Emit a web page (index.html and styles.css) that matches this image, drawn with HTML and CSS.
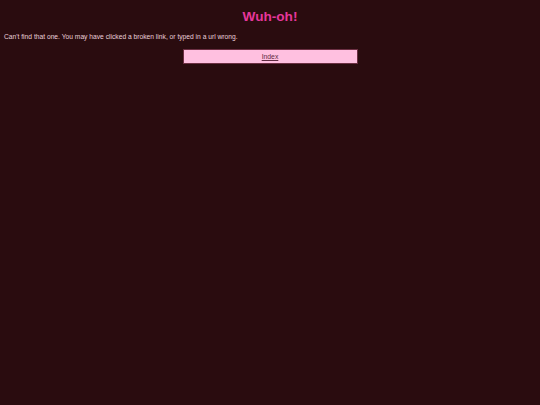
FILE: index.html
```html
<!DOCTYPE html>
<html lang="en">
<head>
    <meta charset="UTF-8">
    <meta name="viewport" content="width=device-width, initial-scale=1.0">
    <title>Wuh-oh!</title>
    <link rel="stylesheet" href="styles.css">
</head>
<body>
    <h1 class="title">Wuh-oh!</h1>
    <p class="message">Can't find that one. You may have clicked a broken link, or typed in a url wrong.</p>
    <div class="nav">
        <a class="nav-link" href="/">Index</a>
    </div>
</body>
</html>
```

FILE: styles.css
```css
*{
    margin: 0;
    padding: 0;
    box-sizing: border-box;
}
body{
    background-color: #2a0c0f;
    color: #ead0da;
    font-family: "Liberation Sans", Arial, sans-serif;
    padding: 0 4px;
    height: 100vh;
}
.title{
    color: #e6379b;
    font-size: 13.6px;
    text-align: center;
    padding-top: 8px;
    line-height: 17px;
}
.message{
    font-size: 6.7px;
    margin-top: 7px;
    line-height: 9px;
}
.nav{
    display: flex;
    justify-content: center;
    margin-top: 8px;
}
.nav-link{
    display: block;
    width: 175px;
    height: 15px;
    line-height: 13px;
    text-align: center;
    background-color: #ffc0e0;
    border: 1px solid #6b2f42;
    color: #5e2a40;
    font-size: 6.8px;
}
```
